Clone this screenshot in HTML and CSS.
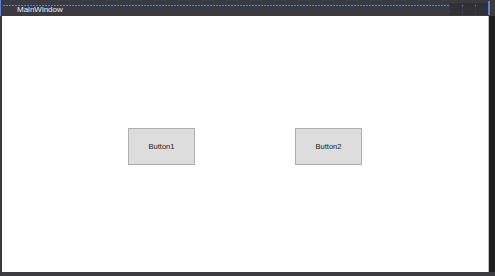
FILE: index.html
```html
<!DOCTYPE html>
<html>
<head>
<meta charset="utf-8">
<link rel="stylesheet" href="styles.css">
</head>
<body>
<div class="window">
  <div class="titlebar">
    <div class="dots"></div>
    <span class="title">MainWindow</span>
    <div class="caption-buttons">
      <span class="cbtn"></span><span class="cbtn"></span><span class="cbtn"></span>
    </div>
    <span class="edge-right"></span>
  </div>
  <div class="body-row">
    <div class="client">
      <button class="btn">Button1</button>
      <button class="btn">Button2</button>
    </div>
    <div class="side"></div>
  </div>
</div>
</body>
</html>
```
FILE: styles.css
```css
html, body {
  margin: 0;
  padding: 0;
  width: 495px;
  height: 276px;
  overflow: hidden;
  background: #2a2a2c;
}
.window {
  width: 495px;
  height: 276px;
  display: flex;
  flex-direction: column;
  box-sizing: border-box;
  border-left: 2px solid #3a3a3d;
  border-bottom: 4px solid #3d3d40;
}
.titlebar {
  position: relative;
  height: 16px;
  flex: none;
  background: #3b3b3f;
  border-left: 1px solid #5b80d8;
  margin-left: -2px;
  box-sizing: border-box;
}
.dots {
  position: absolute;
  left: 2px;
  right: 7px;
  top: 5px;
  height: 1px;
  background: repeating-linear-gradient(90deg, #5a80e0 0 2px, #3b3b3f 2px 3px);
}
.title {
  position: absolute;
  left: 15px;
  top: 4px;
  font-family: "Liberation Sans", Arial, sans-serif;
  font-size: 8px;
  line-height: 12px;
  color: #ecebf4;
  padding: 0 1px;
}
.caption-buttons {
  position: absolute;
  right: 7px;
  top: 3px;
  display: flex;
  gap: 1px;
}
.cbtn {
  width: 12px;
  height: 12px;
  background: #323236;
}
.edge-right {
  position: absolute;
  right: 5px;
  top: 1px;
  width: 2px;
  height: 14px;
  background: #5b80d8;
}
.body-row {
  flex: 1;
  display: flex;
}
.client {
  flex: 1;
  background: #ffffff;
  display: flex;
  align-items: flex-start;
  padding: 112px 0 0 126px;
  gap: 100px;
  border-right: 1px solid #bcbcbc;
}
.side {
  width: 6px;
  background: #1e1e20;
}
.btn {
  width: 67px;
  height: 37px;
  margin: 0;
  padding: 0;
  background: #dddddd;
  border: 1px solid #b0b0b0;
  font-family: "Liberation Sans", Arial, sans-serif;
  font-size: 7.5px;
  color: #1a1a1a;
}
```
